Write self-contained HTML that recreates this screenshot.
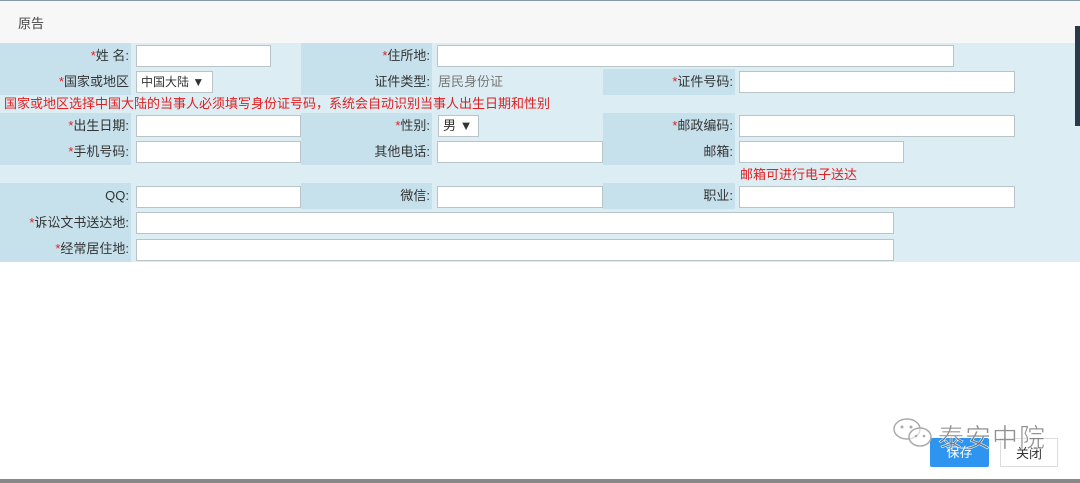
<!DOCTYPE html>
<html><head><meta charset="utf-8"><style>
*{margin:0;padding:0;box-sizing:border-box}
body{width:1080px;height:483px;overflow:hidden;background:#fff;font-family:"Liberation Sans","Noto Sans CJK SC",sans-serif;font-size:13px;color:#333;position:relative}
.hdr{position:absolute;left:0;top:0;width:1080px;height:43px;background:#f7f7f7;border-top:1px solid #8899aa}
.hdr span{position:absolute;left:18px;top:12px;font-size:13px;color:#444}
.form{position:absolute;left:0;top:43px;width:1080px;height:219px;background:#dcedf4}
.sb{position:absolute;left:1075px;top:26px;width:5px;height:100px;background:#2a3a4a;z-index:5}
.c{position:absolute;background:#c7e1ec}
.l{position:absolute;text-align:right;line-height:26px;height:26px}
.r{color:#e02020}
.i{position:absolute;background:#fff;border:1px solid #b9c4c9;height:22px}
.w{position:absolute;color:#e02020;line-height:18px}
.sel{position:absolute;background:#fff;border:1px solid #b9c4c9;height:22px;font-size:12px;line-height:20px;padding-left:4px}
.btn{position:absolute;top:438px;height:29px;line-height:29px;text-align:center;font-size:13px}
.bar{position:absolute;left:0;top:479px;width:1080px;height:4px;background:#888}
</style></head><body>
<div class="hdr"><span>原告</span></div>
<div class="sb"></div>
<div class="form">
<div class="c" style="left:0;top:0;width:131px;height:52px"></div>
<div class="c" style="left:301px;top:0;width:131px;height:52px"></div>
<div class="c" style="left:603px;top:26px;width:132px;height:26px"></div>
<div class="c" style="left:0;top:70px;width:131px;height:52px"></div>
<div class="c" style="left:301px;top:70px;width:131px;height:52px"></div>
<div class="c" style="left:603px;top:70px;width:132px;height:52px"></div>
<div class="c" style="left:0;top:140px;width:131px;height:79px"></div>
<div class="c" style="left:301px;top:140px;width:131px;height:26px"></div>
<div class="c" style="left:603px;top:140px;width:132px;height:26px"></div>

<div class="l" style="left:0;top:0;width:129px"><span class="r">*</span>姓 名:</div>
<div class="i" style="left:136px;top:2px;width:135px"></div>
<div class="l" style="left:301px;top:0;width:129px"><span class="r">*</span>住所地:</div>
<div class="i" style="left:437px;top:2px;width:517px"></div>

<div class="l" style="left:0;top:26px;width:129px"><span class="r">*</span>国家或地区</div>
<div class="sel" style="left:136px;top:28px;width:77px">中国大陆 ▼</div>
<div class="l" style="left:301px;top:26px;width:129px">证件类型:</div>
<div class="l" style="left:438px;top:26px;text-align:left;color:#777">居民身份证</div>
<div class="l" style="left:603px;top:26px;width:130px"><span class="r">*</span>证件号码:</div>
<div class="i" style="left:739px;top:28px;width:276px"></div>

<div class="w" style="left:4px;top:52px">国家或地区选择中国大陆的当事人必须填写身份证号码，系统会自动识别当事人出生日期和性别</div>

<div class="l" style="left:0;top:70px;width:129px"><span class="r">*</span>出生日期:</div>
<div class="i" style="left:136px;top:72px;width:165px"></div>
<div class="l" style="left:301px;top:70px;width:129px"><span class="r">*</span>性别:</div>
<div class="sel" style="left:438px;top:72px;width:41px;font-size:13px">男 ▼</div>
<div class="l" style="left:603px;top:70px;width:130px"><span class="r">*</span>邮政编码:</div>
<div class="i" style="left:739px;top:72px;width:276px"></div>

<div class="l" style="left:0;top:96px;width:129px"><span class="r">*</span>手机号码:</div>
<div class="i" style="left:136px;top:98px;width:165px"></div>
<div class="l" style="left:301px;top:96px;width:129px">其他电话:</div>
<div class="i" style="left:437px;top:98px;width:166px"></div>
<div class="l" style="left:603px;top:96px;width:130px">邮箱:</div>
<div class="i" style="left:739px;top:98px;width:165px"></div>

<div class="w" style="left:740px;top:123px">邮箱可进行电子送达</div>

<div class="l" style="left:0;top:140px;width:129px">QQ:</div>
<div class="i" style="left:136px;top:143px;width:165px"></div>
<div class="l" style="left:301px;top:140px;width:129px">微信:</div>
<div class="i" style="left:437px;top:143px;width:166px"></div>
<div class="l" style="left:603px;top:140px;width:130px">职业:</div>
<div class="i" style="left:739px;top:143px;width:276px"></div>

<div class="l" style="left:0;top:167px;width:129px"><span class="r">*</span>诉讼文书送达地:</div>
<div class="i" style="left:136px;top:169px;width:758px"></div>
<div class="l" style="left:0;top:193px;width:129px"><span class="r">*</span>经常居住地:</div>
<div class="i" style="left:136px;top:196px;width:758px"></div>
</div>

<div class="btn" style="left:930px;width:59px;background:#2d95f0;color:#fff;border-radius:2px">保存</div>
<div class="btn" style="left:1000px;width:58px;background:#fff;border:1px solid #ddd;color:#333">关闭</div>
<svg style="position:absolute;left:892px;top:417px" width="44" height="34" viewBox="0 0 44 34"><g fill="rgba(255,255,255,0.6)" stroke="#aaa" stroke-width="1.5"><ellipse cx="15" cy="12" rx="13" ry="10"/><ellipse cx="28" cy="20" rx="11" ry="9"/></g><g fill="#aaa"><circle cx="10" cy="10" r="1.5"/><circle cx="19" cy="10" r="1.5"/><circle cx="24" cy="19" r="1.3"/><circle cx="32" cy="19" r="1.3"/></g></svg>
<div style="position:absolute;left:938px;top:418px;font-size:26px;color:rgba(110,110,110,0.75);letter-spacing:1px;-webkit-text-stroke:0.5px #fff">泰安中院</div>
<div class="bar"></div>
</body></html>
